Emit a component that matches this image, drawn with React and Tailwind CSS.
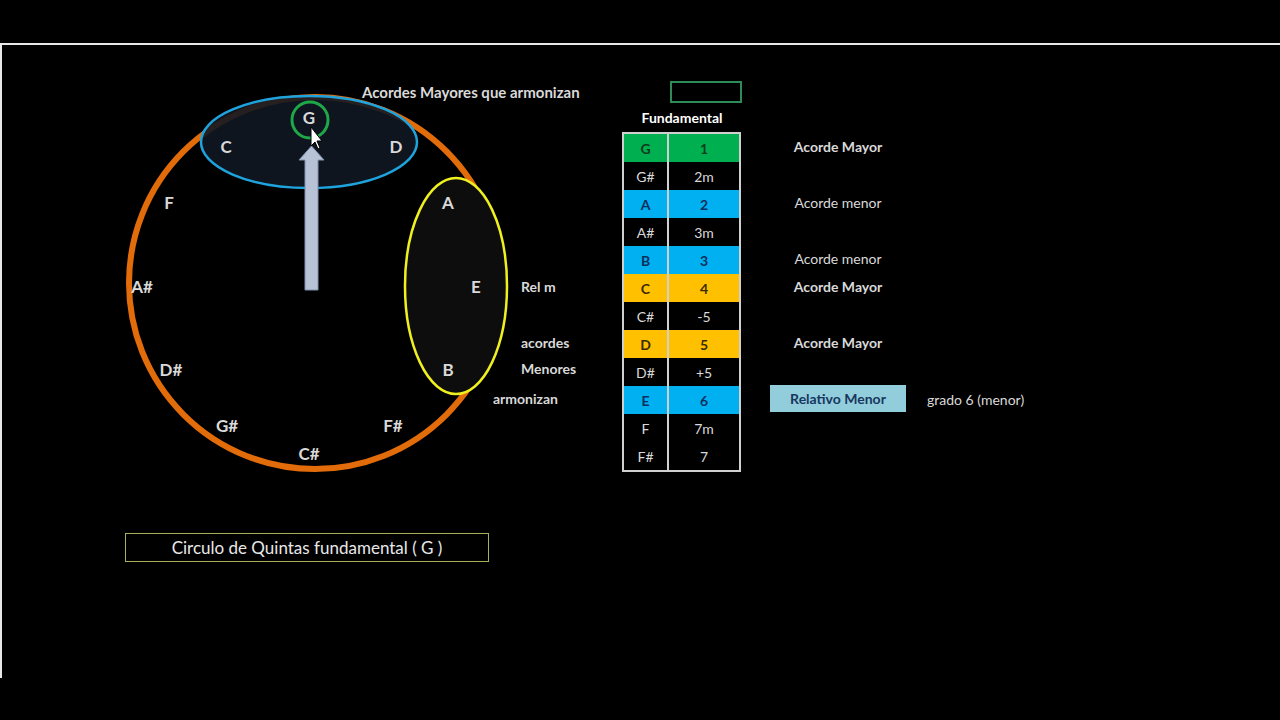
export default function App() {
  const rows = [
    ["G", "1", "bg-[#00b050]", "text-[#0b3d1c]", true, "Acorde Mayor", "bold"],
    ["G#", "2m", "", "text-[#d9d9d9]", false, "", ""],
    ["A", "2", "bg-[#00b0f0]", "text-[#0d2f5c]", true, "Acorde menor", "norm"],
    ["A#", "3m", "", "text-[#d9d9d9]", false, "", ""],
    ["B", "3", "bg-[#00b0f0]", "text-[#0d2f5c]", true, "Acorde menor", "norm"],
    ["C", "4", "bg-[#ffc000]", "text-[#3a2a00]", true, "Acorde Mayor", "bold"],
    ["C#", "-5", "", "text-[#d9d9d9]", false, "", ""],
    ["D", "5", "bg-[#ffc000]", "text-[#3a2a00]", true, "Acorde Mayor", "bold"],
    ["D#", "+5", "", "text-[#d9d9d9]", false, "", ""],
    ["E", "6", "bg-[#00b0f0]", "text-[#0d2f5c]", true, "rel", ""],
    ["F", "7m", "", "text-[#d9d9d9]", false, "", ""],
    ["F#", "7", "", "text-[#d9d9d9]", false, "", ""],
  ];
  const notes = [
    ["G", 307, 124], ["C", 224, 153], ["D", 394, 153], ["F", 167, 209], ["A", 446, 209],
    ["A#", 140, 293], ["E", 474, 293], ["D#", 169, 376], ["B", 446, 376], ["G#", 225, 432],
    ["F#", 391, 432], ["C#", 307, 460],
  ];
  const font = { fontFamily: "Lato, 'Open Sans', sans-serif" };
  return (
    <div className="w-[1280px] h-[720px] bg-black overflow-hidden" style={font}>
      <div className="h-[43px]" />
      <div className="h-[635px] border-t-2 border-l-2 border-[#e8e8e8] relative flex">
        <div className="relative w-[620px] shrink-0">
          <svg width="620" height="500" viewBox="0 45 620 500" className="block">
            <circle cx="313" cy="283" r="186" fill="none" stroke="#e36c0a" strokeWidth="6" />
            <ellipse cx="307" cy="142" rx="108" ry="46" fill="#0f1722" fillOpacity="0.9" stroke="#1fa3dc" strokeWidth="2.5" />
            <ellipse cx="454" cy="286" rx="51" ry="108" fill="#0d0d0d" stroke="#f0f020" strokeWidth="2.5" />
            <path d="M303 290 V160 H297 L309.5 146 L322 160 H316 V290 Z" fill="#b8c2d6" stroke="#8090b0" strokeWidth="1" />
            <circle cx="308" cy="120" r="18" fill="none" stroke="#1fa848" strokeWidth="3" />
            {notes.map(([n, x, y]) => (
              <text key={n} x={x} y={y} textAnchor="middle" fill="#d9d9d9" fontSize="17" fontWeight="bold" style={font}>{n}</text>
            ))}
            <path d="M309 127 L309 146 L313 142 L316 149 L318 148 L315 141 L320 141 Z" fill="#fff" stroke="#000" strokeWidth="1" />
            <text x="360" y="98" fill="#d9d9d9" fontSize="15" fontWeight="bold" style={font}>Acordes Mayores que armonizan</text>
            <text x="519" y="292" fill="#d9d9d9" fontSize="14" fontWeight="bold" style={font}>Rel m</text>
            <text x="519" y="348" fill="#d9d9d9" fontSize="14" fontWeight="bold" style={font}>acordes</text>
            <text x="519" y="374" fill="#d9d9d9" fontSize="14" fontWeight="bold" style={font}>Menores</text>
            <text x="491" y="404" fill="#d9d9d9" fontSize="14" fontWeight="bold" style={font}>armonizan</text>
          </svg>
          <div className="ml-[123px] mt-[-12px] w-[364px] h-[29px] border border-[#a8b060] flex items-center justify-center text-[17px] text-[#e8e8e8]">
            Circulo de Quintas fundamental ( G )
          </div>
        </div>
        <div className="pt-[36px]">
          <div className="ml-[48px] w-[72px] h-[22px] border-2 border-[#2e8b57] bg-black" />
          <div className="w-[120px] text-center text-white font-bold text-[14px] h-[29px] leading-[29px]">Fundamental</div>
          <div className="w-[119px] border-2 border-[#d0d0d0] flex flex-col">
            {rows.map((r) => (
              <div key={r[0]} className={"flex h-[28px] text-[14px] " + r[2] + " " + r[3] + (r[4] ? " font-bold" : "")}>
                <div className="w-[45px] border-r-2 border-[#d0d0d0] flex items-center justify-center">{r[0]}</div>
                <div className="flex-1 flex items-center justify-center">{r[1]}</div>
              </div>
            ))}
          </div>
        </div>
        <div className="pt-[87px] ml-[28px] flex flex-col">
          {rows.map((r) => (
            <div key={r[0]} className="h-[28px] flex items-center">
              {r[5] === "rel" ? (
                <div className="flex items-center">
                  <div className="w-[136px] h-[27px] bg-[#92cddc] text-[#17375e] font-bold text-[14px] flex items-center justify-center mt-[1px]">Relativo Menor</div>
                  <span className="ml-[21px] text-[#d9d9d9] text-[14px] mt-[3px]">grado 6 (menor)</span>
                </div>
              ) : (
                <div className={"w-[136px] text-center text-[14px] text-[#d9d9d9] " + (r[6] === "bold" ? "font-bold" : "")}>{r[5]}</div>
              )}
            </div>
          ))}
        </div>
      </div>
    </div>
  );
}
